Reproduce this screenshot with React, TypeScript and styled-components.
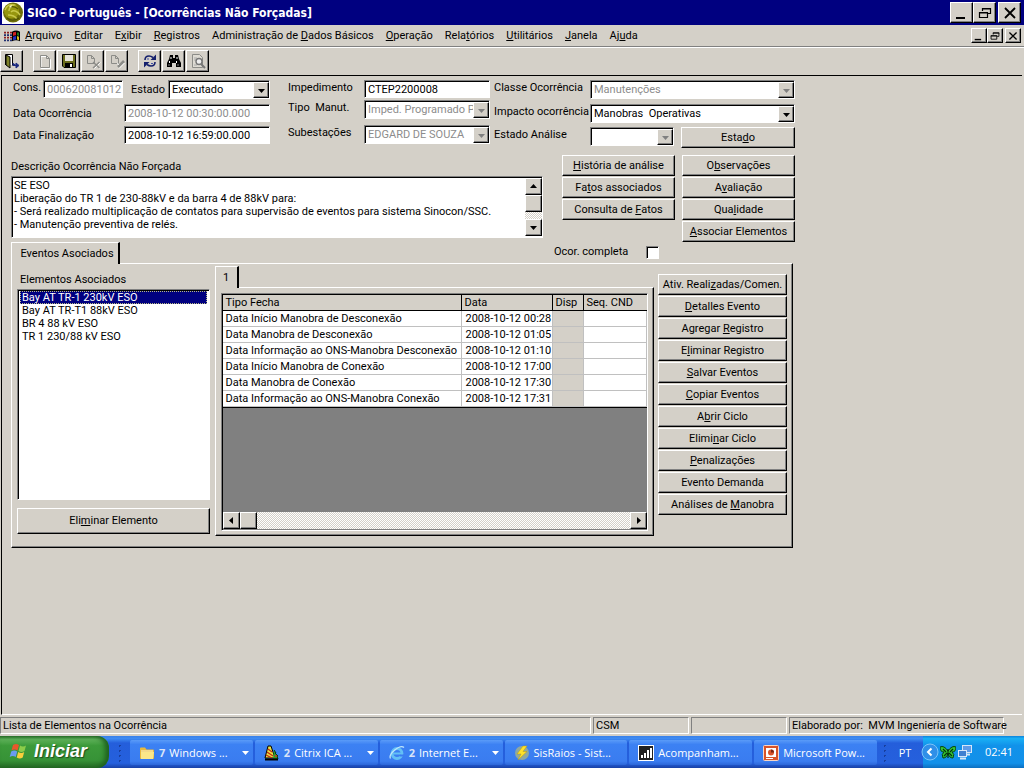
import React from "react";
import styled, { createGlobalStyle, css } from "styled-components";

const face = "#d4d0c8";
const sans = 'Roboto, "Liberation Sans", Arial, sans-serif';
const taskFont = '"Open Sans", "Noto Sans", sans-serif';
const titleFont = '"DejaVu Sans Condensed", "Noto Sans", sans-serif';

const raised = css`
  background: ${face};
  border: 1px solid;
  border-color: #fff #000 #000 #fff;
  box-shadow: inset -1px -1px 0 #808080;
`;
const sunken = css`
  border: 1px solid;
  border-color: #808080 #fff #fff #808080;
  box-shadow: inset 1px 1px 0 #000;
`;

const GlobalStyle = createGlobalStyle`
  *, *::before, *::after { box-sizing: border-box; }
  body { margin: 0; background: ${face}; font: 11px/14px ${sans}; color: #000; }
  button, input, select, textarea { font: inherit; color: inherit; margin: 0; padding: 0; border-radius: 0; }
`;

const Screen = styled.div`
  min-height: 100vh;
  display: flex;
  flex-direction: column;
`;

/* ---------- window chrome ---------- */
const TitleBar = styled.header`
  display: flex;
  align-items: center;
  height: 25px;
  padding: 0 3px 0 2px;
  background: #000080;
  color: #fff;
`;
const Title = styled.h1`
  margin: 0 auto 0 3px;
  font: bold 12px/20px ${titleFont};
  white-space: nowrap;
`;
const WindowButtons = styled.div`
  display: flex;
  button:last-child { margin-left: 2px; }
`;
const WindowButton = styled.button<{ $small?: boolean }>`
  ${raised}
  display: grid;
  place-items: center;
  width: ${(p) => (p.$small ? 16 : 23)}px;
  height: ${(p) => (p.$small ? 15 : 21)}px;
`;
const MenuBar = styled.nav`
  display: flex;
  align-items: center;
  height: 22px;
  padding: 0 3px 0 4px;
  border-bottom: 1px solid #808080;
`;
const MenuList = styled.div`
  display: flex;
  gap: 12px;
  margin: 0 auto 0 5px;
`;
const MenuItem = styled.button`
  border: 0;
  background: none;
  white-space: nowrap;
`;
const ToolBar = styled.div`
  display: flex;
  align-items: flex-start;
  gap: 10px;
  height: 28px;
  padding-top: 2px;
  border-top: 1px solid #fff;
`;
const ToolGroup = styled.div`
  display: flex;
  gap: 1px;
`;
const ToolButton = styled.button`
  ${raised}
  display: grid;
  place-items: center;
  width: 23px;
  height: 22px;
`;
const Workspace = styled.main`
  flex: 1;
  margin: 0 2px 0 1px;
  padding: 4px 0 8px 9px;
  border: solid #000;
  border-width: 1px 0 0 1px;
  border-bottom: 1px solid #fff;
`;
const Form = styled.form`
  width: 784px;
  max-width: 100%;
`;

/* ---------- fields ---------- */
const FieldColumns = styled.div`
  display: grid;
  grid-template-columns: 257px 202px 301px;
  column-gap: 4px;
  height: 75px;
  padding-left: 2px;
  > :nth-child(2) { margin: 0 -14px 0 14px; }
  > :nth-child(3) { margin-left: 14px; margin-right: -14px; }
`;
const FieldColumn = styled.div<{ $rows: string }>`
  display: grid;
  grid-template-rows: ${(p) => p.$rows};
`;
const FieldRow = styled.div<{ $label: number }>`
  display: grid;
  grid-template-columns: ${(p) => p.$label}px 1fr;
  align-items: start;
`;
const StateRow = styled.div`
  display: grid;
  grid-template-columns: 22px 80px 29px 102px;
  column-gap: 8px;
`;
const AnalysisRow = styled.div`
  display: flex;
  align-items: flex-start;
  label { flex: 0 0 96px; }
  > span { flex: 0 0 84px; }
  > button { width: 114px; margin-left: auto; }
`;
const Label = styled.label<{ $low?: boolean; $indent?: boolean }>`
  display: block;
  padding-top: ${(p) => (p.$low ? 3 : 1)}px;
  padding-left: ${(p) => (p.$indent ? 3 : 0)}px;
  white-space: nowrap;
`;
const TextField = styled.input`
  ${sunken}
  width: 100%;
  height: 18px;
  padding: 0 0 0 3px;
  background: #fff;
  &:disabled { color: #8c8c8c; }
`;
const SelectShell = styled.span`
  ${sunken}
  display: grid;
  height: 19px;
  background: #fff;
  > * { grid-area: 1 / 1; }
`;
const NativeSelect = styled.select`
  appearance: none;
  width: 100%;
  height: 17px;
  padding: 0 14px 0 3px;
  border: 0;
  background: transparent;
  &:disabled { color: #8c8c8c; opacity: 1; }
`;
const SelectArrow = styled.span<{ $off?: boolean }>`
  ${raised}
  display: grid;
  place-items: center;
  justify-self: end;
  width: 16px;
  height: 16px;
  margin-top: 1px;
  pointer-events: none;
  color: ${(p) => (p.$off ? "#808080" : "#000")};
`;
const PushButton = styled.button<{ $tall?: boolean }>`
  ${raised}
  width: 100%;
  height: ${(p) => (p.$tall ? 26 : 21)}px;
  white-space: nowrap;
`;

/* ---------- description ---------- */
const MiddleRow = styled.div`
  display: grid;
  grid-template-columns: 1fr 113px 113px;
  column-gap: 7px;
  height: 87px;
`;
const Description = styled.div`
  display: flex;
  flex-direction: column;
  padding: 4px 12px 2px 0;
`;
const MemoBox = styled.div`
  ${sunken}
  display: flex;
  height: 62px;
  margin-top: 2px;
  padding: 1px 0 1px 1px;
  background: #fff;
`;
const Memo = styled.textarea`
  flex: 1;
  resize: none;
  overflow: hidden;
  border: 0;
  padding: 1px;
  line-height: 13px;
  background: transparent;
`;
const ButtonStack = styled.div`
  display: flex;
  flex-direction: column;
  gap: 1px;
`;
const ScrollTrack = styled.div<{ $across?: boolean }>`
  display: flex;
  flex-direction: ${(p) => (p.$across ? "row" : "column")};
  justify-content: space-between;
  background: repeating-conic-gradient(#fff 0 25%, ${face} 0 50%) 0 0 / 2px 2px;
`;
const ScrollHead = styled.div<{ $across?: boolean }>`
  display: flex;
  flex-direction: ${(p) => (p.$across ? "row" : "column")};
`;
const ScrollPiece = styled.button`
  ${raised}
  display: grid;
  place-items: center;
  width: 17px;
  height: 17px;
`;

/* ---------- tabs ---------- */
const TabHead = styled.div`
  display: flex;
  align-items: flex-end;
  height: 21px;
`;
const Tab = styled.button<{ $inner?: boolean }>`
  height: 22px;
  width: ${(p) => (p.$inner ? 24 : 109)}px;
  margin-bottom: -1px;
  padding: 1px 0 0 ${(p) => (p.$inner ? 0 : 4)}px;
  border: 1px solid;
  border-color: #fff #000 transparent #fff;
  border-bottom: 0;
  border-right-width: 2px;
  background: ${face};
`;
const CompleteRow = styled.div`
  display: flex;
  align-items: center;
  justify-content: space-between;
  width: 105px;
  margin-left: 434px;
  height: 22px;
`;
const CheckBox = styled.input`
  ${sunken}
  appearance: none;
  width: 13px;
  height: 13px;
  background: #fff;
  &:checked { background: #000; }
`;
const TabPanel = styled.section`
  display: grid;
  grid-template-columns: 193px 439px 129px;
  justify-content: space-between;
  width: 782px;
  height: 285px;
  padding: 2px 5px 0 5px;
  border: 1px solid;
  border-color: #fff #000 #000 #fff;
  box-shadow: inset -1px -1px 0 #808080;
`;
const ElementsColumn = styled.div`
  padding-top: 6px;
`;
const ListBox = styled.ul`
  ${sunken}
  height: 211px;
  margin: 2px 0 8px;
  padding: 1px 2px;
  list-style: none;
  background: #fff;
  line-height: 13px;
`;
const ListItem = styled.li<{ $selected?: boolean }>`
  padding-left: 2px;
  color: ${(p) => (p.$selected ? "#fff" : "#000")};
  background: ${(p) => (p.$selected ? "#000080" : "transparent")};
  outline: ${(p) => (p.$selected ? "1px dotted #b8b880" : "0")};
  outline-offset: -1px;
`;
const CyclePanel = styled.div`
  height: 249px;
  padding: 5px;
  border: 1px solid;
  border-color: #fff #000 #000 #fff;
  box-shadow: inset -1px -1px 0 #808080;
`;
const GridBox = styled.div`
  ${sunken}
  display: flex;
  flex-direction: column;
  justify-content: space-between;
  height: 238px;
  padding: 1px 0 1px 1px;
  background: #808080;
`;
const DataTable = styled.table`
  width: 100%;
  table-layout: fixed;
  border-collapse: separate;
  border-spacing: 0;
  border-bottom: 1px solid #000;
`;
const HeadCell = styled.th<{ $w?: number }>`
  width: ${(p) => (p.$w ? `${p.$w}px` : "auto")};
  height: 16px;
  padding: 0 3px;
  border-right: 1px solid #000;
  border-bottom: 1px solid #000;
  background: ${face};
  font-weight: normal;
  text-align: left;
  white-space: nowrap;
  &:last-child { border-right: 0; }
`;
const Cell = styled.td<{ $gray?: boolean }>`
  height: 16px;
  padding: 1px 0 0 3px;
  border-right: 1px solid #c0c0c0;
  border-bottom: 1px solid #c0c0c0;
  background: ${(p) => (p.$gray ? face : "#fff")};
  white-space: nowrap;
  &:nth-child(2) { padding-left: 4px; }
`;
const ActionColumn = styled(ButtonStack)`
  padding-top: 8px;
`;

/* ---------- status bar ---------- */
const StatusBar = styled.footer`
  display: grid;
  grid-template-columns: 1fr 96px 96px 215px;
  gap: 2px;
  height: 21px;
  padding: 2px 20px 2px 0;
  line-height: 15px;
`;
const StatusPane = styled.div`
  border: 1px solid;
  border-color: #808080 #fff #fff #808080;
  padding-left: 2px;
  white-space: nowrap;
`;

/* ---------- taskbar ---------- */
const TaskBar = styled.div`
  display: flex;
  height: 32px;
  background: linear-gradient(#3a80e8 0, #3f8cf3 8%, #245edb 22%, #2560dd 85%, #1941a5 100%);
  color: #fff;
  font: 11px/16px ${taskFont};
`;
const StartButton = styled.button`
  display: flex;
  align-items: center;
  gap: 5px;
  width: 109px;
  padding: 0 0 2px 9px;
  border: 0;
  border-radius: 0 12px 12px 0;
  background: linear-gradient(#2f7a2f 0, #5fb25a 10%, #3c9a3a 30%, #379337 75%, #256b25 100%);
  box-shadow: inset -4px 0 5px #1f611f;
  font: italic bold 18px/24px "Liberation Sans", sans-serif;
  text-shadow: 1px 1px 1px #1c4d1c;
`;
const GripSlot = styled.div<{ $narrow?: boolean }>`
  display: flex;
  justify-content: center;
  width: ${(p) => (p.$narrow ? 14 : 21)}px;
  flex: none;
`;
const Grip = styled.span`
  width: 5px;
  height: 22px;
  margin-top: 7px;
  background: radial-gradient(#173f9f 1px, transparent 1px) 0 0 / 5px 5px;
`;
const TaskList = styled.div`
  flex: 1;
  display: grid;
  grid-template-columns: repeat(6, minmax(0, 1fr));
  gap: 2px;
  padding: 4px 0 3px;
  min-width: 0;
`;
const TaskButton = styled.button`
  display: flex;
  align-items: center;
  gap: 4px;
  padding: 0 4px 0 9px;
  border: 0;
  border-radius: 2px;
  background: linear-gradient(#5a9bf8 0, #3c81f3 18%, #3a7cf0 85%, #2c66d8 100%);
  white-space: nowrap;
  > svg { flex: none; }
  > svg:last-child { margin-left: auto; }
  b { color: #d9e4f8; }
`;
const Language = styled.div`
  display: grid;
  place-items: center;
  width: 32px;
  padding: 2px 4px 0 0;
`;
const Tray = styled.div`
  display: flex;
  align-items: center;
  gap: 1px;
  width: 101px;
  padding-right: 11px;
  background: linear-gradient(#0d83dc 0, #19b0f5 8%, #1192ea 30%, #1290e9 85%, #0d6fc0 100%);
`;
const Chevron = styled.button`
  display: flex;
  margin-left: -2px;
  border: 0;
  background: none;
`;
const Clock = styled.time`
  margin-left: auto;
`;

/* ---------- drawings ---------- */
type Dir = "up" | "down" | "left" | "right";
const arrowPoints: Record<Dir, string> = {
  down: "0,2 7,2 3.5,6",
  up: "0,5 7,5 3.5,1",
  left: "5,0 5,7 1,3.5",
  right: "2,0 2,7 6,3.5",
};
const Arrow = ({ dir, fill = "currentColor" }: { dir: Dir; fill?: string }) => (
  <svg width="7" height="7" viewBox="0 0 7 7" aria-hidden="true">
    <polygon points={arrowPoints[dir]} fill={fill} />
  </svg>
);

const OrbLogo = () => (
  <svg width="22" height="22" viewBox="0 0 22 22" aria-hidden="true">
    <rect width="22" height="22" fill="#fff" />
    <circle cx="11" cy="10.5" r="10" fill="#6f6f08" />
    <circle cx="9.5" cy="9" r="7.5" fill="#96960f" />
    <path d="M3 8c2-5 6-6 9-5-3 1-5 3-5 6M9 10c3-3 7 0 9 3M6 13c4 0 7 1 9 4" fill="none" stroke="#c9c84a" strokeWidth="1.5" />
    <path d="M8 5c3-1 6 0 8 2M5 16c3 3 8 3 12 0" fill="none" stroke="#4f5206" strokeWidth="1.2" />
    <path d="M7 4l3-1-1 3z" fill="#f4f4b8" />
  </svg>
);
const FormLogo = () => (
  <svg width="16" height="12" viewBox="0 0 16 14" preserveAspectRatio="none" aria-hidden="true">
    <path d="M0 3h2M3 3h2M6 3h2M0 9h2M3 9h2M6 9h2" stroke="#8a2020" strokeWidth="2" />
    <path d="M0 6h2M3 6h2M6 6h2M0 12h2M3 12h2M6 12h2" stroke="#22306f" strokeWidth="2" />
    <path d="M8 2q4-3 8 0v11q-4-2-8 0z" fill="#000" />
    <path d="M9 3q2-1 3-1v4q-2 0-3 1z" fill="#d02020" />
    <path d="M13 3h2v4l-2-1z" fill="#187818" />
    <path d="M9 8l3-1v4l-3 1z" fill="#2030c0" />
    <path d="M13 7l2 1v4l-2-1z" fill="#d8c020" />
  </svg>
);
const Minimize = ({ s }: { s: number }) => (
  <svg width={s} height={s} viewBox="0 0 14 14" aria-hidden="true"><path d="M1 12h9" stroke="#000" strokeWidth="2" /></svg>
);
const Restore = ({ s }: { s: number }) => (
  <svg width={s} height={s} viewBox="0 0 14 14" aria-hidden="true">
    <path d="M4.500 5V2.500h8v5H10M4 3h9M1.500 6.500h8v5h-8zM1 7h9" fill="none" stroke="#000" strokeWidth="1.200" />
  </svg>
);
const Close = ({ s }: { s: number }) => (
  <svg width={s} height={s} viewBox="0 0 14 14" aria-hidden="true"><path d="M2 2l10 10M12 2L2 12" stroke="#000" strokeWidth="1.8" /></svg>
);
const Glyph = ({ children, size = 16 }: { children: React.ReactNode; size?: number }) => (
  <svg width={size} height={size} viewBox="0 0 16 16" fill="none" aria-hidden="true">{children}</svg>
);
const ExitIcon = () => (
  <Glyph>
    <path d="M1.500 12V1.500h7V12" stroke="#000" fill="#fff" />
    <path d="M2 2l4 2v11l-4-3z" fill="#7d8028" stroke="#000" />
    <path d="M8 12h3" stroke="#000" />
    <path d="M9 10v2.500h4M12 10l3 2.500-3 2.500z" stroke="#1c2b80" fill="#1c2b80" />
  </Glyph>
);
const NewIcon = () => (
  <Glyph>
    <path d="M4 3.500h6l3.500 3v9H4z" stroke="#fff" />
    <path d="M3.500 2.500h6l3 3v9h-9zM9.500 2.500v3h3" stroke="#8c8c88" />
  </Glyph>
);
const SaveIcon = () => (
  <Glyph>
    <path d="M1.500 1.500h13v13H3l-1.500-1.500z" fill="#6a6c1c" stroke="#000" />
    <path d="M4 2h8v6H4z" fill="#e6e4da" />
    <path d="M4 10h8v5H4z" fill="#000" />
    <path d="M9 11h2v3H9z" fill="#fff" />
  </Glyph>
);
const DeleteIcon = () => (
  <Glyph>
    <path d="M2.500 2.500h4l3 3v5h-7zM6.500 2.500v3h3" stroke="#8c8c88" />
    <path d="M9 10l6 5.500M15.500 9.500l-6 6" stroke="#fff" />
    <path d="M8 9l6.500 6M14.500 9l-6.500 6" stroke="#8c8c88" strokeWidth="1.400" />
  </Glyph>
);
const EditIcon = () => (
  <Glyph>
    <path d="M2.500 2.500h4l3 3v5h-7zM6.500 2.500v3h3" stroke="#8c8c88" />
    <path d="M9 14l6-6" stroke="#8c8c88" strokeWidth="2.600" />
    <path d="M10 15.500l5.500-5.500M8 10.500l2 1" stroke="#fff" />
  </Glyph>
);
const RefreshIcon = () => (
  <Glyph>
    <path d="M3 7q0-4 4-4 2 0 4 1.500M13 9q0 4-4 4-2 0-4-1.500" stroke="#15206c" strokeWidth="1.600" />
    <path d="M8.500 7H14V1.500zM7.500 9H2v5.500z" fill="#15206c" />
    <path d="M5 6h2M9 10.500h2" stroke="#3f4fa8" />
  </Glyph>
);
const FindIcon = () => (
  <Glyph>
    <path d="M4 2h3v3h2V2h3l1 4 2 4v4h-5v-4H6v4H1v-4l2-4z" fill="#000" />
    <path d="M3.500 8v2M10.500 8v2M5 4v2M11 4v2M2.500 12h1M11.500 12h1" stroke="#fff" />
  </Glyph>
);
const PreviewIcon = () => (
  <Glyph>
    <path d="M2.500 1.500h7l3 3v10h-10z" stroke="#8c8c88" fill="#dedbd3" />
    <path d="M4 5h3M4 7h2M4 12h3" stroke="#aaa" />
    <circle cx="9" cy="8.500" r="3" stroke="#777" strokeWidth="1.400" fill="#eee" />
    <path d="M11 11l4 4" stroke="#777" strokeWidth="2" />
  </Glyph>
);
const FlagIcon = () => (
  <svg width="20" height="20" viewBox="0 0 20 20" aria-hidden="true">
    <path d="M4 4q3-2 6 0L8.500 9.500q-3-2-6 0z" fill="#e8572b" />
    <path d="M11 4.500q3 2 6 0L15.500 10q-3 2-6 0z" fill="#8ccc4a" />
    <path d="M2.200 10.500q3-2 6 0L6.700 16q-3-2-6 0z" fill="#6a9bf0" />
    <path d="M9.200 11q3 2 6 0l-1.500 5.500q-3 2-6 0z" fill="#f8cf3c" />
  </svg>
);
const FolderIcon = () => (
  <Glyph>
    <path d="M1 3.500q0-1 1-1h4l1.500 2H14q1 0 1 1V13q0 1-1 1H2q-1 0-1-1z" fill="#e9b93c" />
    <path d="M2 7h13l-1 7H2z" fill="#fbe789" />
    <path d="M2 6h12" stroke="#fffbd8" />
  </Glyph>
);
const CitrixIcon = () => (
  <Glyph>
    <path d="M4 1h3l4 12H1z" fill="#e8e040" stroke="#000" />
    <path d="M4 4l4 3M3 7l6 4M2 10l6 3" stroke="#c02818" strokeWidth="1.300" />
    <path d="M10 5l2 3h-1l3 3h-1l1 3H9" stroke="#083c08" fill="#2f9a2f" />
    <path d="M1 14.500h13" stroke="#000" strokeWidth="2" />
    <circle cx="12" cy="11" r="1" fill="#e03020" />
  </Glyph>
);
const BrowserIcon = () => (
  <Glyph>
    <circle cx="8" cy="8.500" r="5" stroke="#63c0f5" strokeWidth="2.800" />
    <path d="M4 8.500h9" stroke="#63c0f5" strokeWidth="2" />
    <path d="M11 10.500h4" stroke="#3a7cf0" strokeWidth="2" />
    <path d="M1.500 13.500C-1 9 11-1 15 2.500" stroke="#bfe6fb" strokeWidth="1.300" />
  </Glyph>
);
const BoltIcon = () => (
  <Glyph>
    <circle cx="8" cy="8" r="7" fill="#8fa8a0" />
    <path d="M9 1L3 9h4l-3 6 9-8.500H9L13 1z" fill="#ffe22a" stroke="#b99a10" strokeWidth=".5" />
  </Glyph>
);
const ChartIcon = () => (
  <Glyph>
    <rect x=".5" y=".5" width="15" height="15" fill="#202020" stroke="#fff" />
    <path d="M4 13v-3M7 13V8M10 13V5M13 13V3" stroke="#fff" strokeWidth="2" />
  </Glyph>
);
const SlidesIcon = () => (
  <Glyph>
    <rect x=".5" y=".5" width="15" height="15" rx="1" fill="#d8532a" stroke="#f7d5c5" />
    <rect x="3" y="3" width="10" height="9" fill="#fff" />
    <circle cx="8" cy="7.500" r="3" fill="#d8532a" />
    <path d="M8 7.500v-3a3 3 0 0 1 3 3z" fill="#7c2410" />
    <path d="M3 13.500h7" stroke="#fff" />
  </Glyph>
);
const ButterflyIcon = () => (
  <Glyph>
    <path d="M8 7Q4 1 0 3q0 5 4 5-3 2-1 6 4 0 5-5 1 5 5 5 2-4-1-6 4 0 4-5-4-2-8 4z" fill="#35c535" stroke="#04440c" />
    <path d="M8 5v9M3 5l3 3M13 5l-3 3M4 12l3-3M12 12l-3-3" stroke="#04340a" strokeWidth="1.200" />
  </Glyph>
);
const NetworkIcon = () => (
  <Glyph>
    <rect x="5.500" y="1.500" width="9" height="7" fill="#5f9be8" stroke="#d6e6f8" />
    <path d="M8 10.500h5" stroke="#d6e6f8" strokeWidth="2" />
    <rect x="1.500" y="6.500" width="8" height="6" fill="#3f7fd0" stroke="#d6e6f8" />
    <path d="M3 14.500h6" stroke="#d6e6f8" strokeWidth="2" />
  </Glyph>
);

/* Text with its access key marked by an ampersand, e.g. "E&xibir". */
const Keyed = ({ text }: { text: string }) => {
  const at = text.indexOf("&");
  if (at < 0) return <>{text}</>;
  return (
    <>
      {text.slice(0, at)}
      <u>{text[at + 1]}</u>
      {text.slice(at + 2)}
    </>
  );
};

const Combo = ({ id, value, disabled }: { id: string; value: string; disabled?: boolean }) => (
  <SelectShell>
    <NativeSelect id={id} disabled={disabled} defaultValue={value}>
      <option>{value}</option>
    </NativeSelect>
    <SelectArrow $off={disabled}><Arrow dir="down" /></SelectArrow>
  </SelectShell>
);

const menus = ["&Arquivo", "&Editar", "E&xibir", "&Registros", "Administração de &Dados Básicos", "&Operação", "Rela&tórios", "&Utilitários", "&Janela", "Aj&uda"];
const toolGroups = [
  [{ name: "Sair", Icon: ExitIcon }],
  [{ name: "Novo", Icon: NewIcon }, { name: "Salvar", Icon: SaveIcon }, { name: "Excluir", Icon: DeleteIcon }, { name: "Editar", Icon: EditIcon }],
  [{ name: "Atualizar", Icon: RefreshIcon }, { name: "Localizar", Icon: FindIcon }, { name: "Visualizar", Icon: PreviewIcon }],
];
const analysisButtons = ["&História de análise", "Fa&tos associados", "Consulta de &Fatos"];
const qualityButtons = ["O&bservações", "A&valiação", "Qua&lidade", "&Associar Elementos"];
const eventButtons = ["Ativ. Reali&zadas/Comen.", "&Detalles Evento", "Agregar &Registro", "E&liminar Registro", "&Salvar Eventos", "&Copiar Eventos", "A&brir Ciclo", "Elimi&nar Ciclo", "&Penalizações", "Evento Demanda", "Análises de &Manobra"];
const elements = ["Bay AT TR-1 230kV ESO", "Bay AT TR-T1 88kV ESO", "BR 4 88 kV ESO", "TR 1 230/88 kV ESO"];
const events = [
  ["Data Início Manobra de Desconexão", "2008-10-12 00:28"],
  ["Data Manobra de Desconexão", "2008-10-12 01:05"],
  ["Data Informação ao ONS-Manobra Desconexão", "2008-10-12 01:10"],
  ["Data Início Manobra de Conexão", "2008-10-12 17:00"],
  ["Data Manobra de Conexão", "2008-10-12 17:30"],
  ["Data Informação ao ONS-Manobra Conexão", "2008-10-12 17:31"],
];
const tasks = [
  { count: "7", text: "Windows ...", Icon: FolderIcon },
  { count: "2", text: "Citrix ICA ...", Icon: CitrixIcon },
  { count: "2", text: "Internet E...", Icon: BrowserIcon },
  { count: "", text: "SisRaios - Sist...", Icon: BoltIcon },
  { count: "", text: "Acompanham...", Icon: ChartIcon },
  { count: "", text: "Microsoft Pow...", Icon: SlidesIcon },
];
const description = `SE ESO
Liberação do TR 1 de 230-88kV e da barra 4 de 88kV para:
- Será realizado multiplicação de contatos para supervisão de eventos para sistema Sinocon/SSC.
- Manutenção preventiva de relés.`;

const Controls = ({ small }: { small?: boolean }) => {
  const s = small ? 10 : 14;
  return (
    <WindowButtons>
      <WindowButton type="button" $small={small} aria-label="Minimizar"><Minimize s={s} /></WindowButton>
      <WindowButton type="button" $small={small} aria-label="Restaurar"><Restore s={s} /></WindowButton>
      <WindowButton type="button" $small={small} aria-label="Fechar"><Close s={s} /></WindowButton>
    </WindowButtons>
  );
};

const Buttons = ({ items }: { items: string[] }) => (
  <>
    {items.map((t) => (
      <PushButton type="button" key={t}><Keyed text={t} /></PushButton>
    ))}
  </>
);

export default function App() {
  return (
    <Screen>
      <GlobalStyle />
      <TitleBar>
        <OrbLogo />
        <Title>SIGO - Português - [Ocorrências Não Forçadas]</Title>
        <Controls />
      </TitleBar>
      <MenuBar>
        <FormLogo />
        <MenuList>
          {menus.map((m) => <MenuItem key={m}><Keyed text={m} /></MenuItem>)}
        </MenuList>
        <Controls small />
      </MenuBar>
      <ToolBar>
        {toolGroups.map((group, i) => (
          <ToolGroup key={i}>
            {group.map(({ name, Icon }) => (
              <ToolButton key={name} aria-label={name}><Icon /></ToolButton>
            ))}
          </ToolGroup>
        ))}
      </ToolBar>

      <Workspace>
        <Form onSubmit={(e) => e.preventDefault()}>
          <FieldColumns>
            <FieldColumn $rows="24px 22px 18px">
              <StateRow>
                <Label htmlFor="cons">Cons.</Label>
                <TextField id="cons" disabled defaultValue="000620081012" />
                <Label htmlFor="estado" $low>Estado</Label>
                <Combo id="estado" value="Executado" />
              </StateRow>
              <FieldRow $label={111}>
                <Label htmlFor="ocorrencia" $low>Data Ocorrência</Label>
                <TextField id="ocorrencia" disabled defaultValue="2008-10-12 00:30:00.000" />
              </FieldRow>
              <FieldRow $label={111}>
                <Label htmlFor="finalizacao" $low>Data Finalização</Label>
                <TextField id="finalizacao" defaultValue="2008-10-12 16:59:00.000" />
              </FieldRow>
            </FieldColumn>
            <FieldColumn $rows="20px 25px 18px">
              <FieldRow $label={76}>
                <Label htmlFor="impedimento">Impedimento</Label>
                <TextField id="impedimento" defaultValue="CTEP2200008" />
              </FieldRow>
              <FieldRow $label={76}>
                <Label htmlFor="manut">Tipo&nbsp; Manut.</Label>
                <Combo id="manut" value="Imped. Programado P" disabled />
              </FieldRow>
              <FieldRow $label={76}>
                <Label htmlFor="subestacoes">Subestações</Label>
                <Combo id="subestacoes" value="EDGARD DE SOUZA" disabled />
              </FieldRow>
            </FieldColumn>
            <FieldColumn $rows="24px 23px 21px">
              <FieldRow $label={96}>
                <Label htmlFor="classe">Classe Ocorrência</Label>
                <Combo id="classe" value="Manutenções" disabled />
              </FieldRow>
              <FieldRow $label={96}>
                <Label htmlFor="impacto">Impacto ocorrência</Label>
                <Combo id="impacto" value={"Manobras\u00a0 Operativas"} />
              </FieldRow>
              <AnalysisRow>
                <Label htmlFor="analise">Estado Análise</Label>
                <Combo id="analise" value="" disabled />
                <PushButton type="button"><Keyed text="Esta&do" /></PushButton>
              </AnalysisRow>
            </FieldColumn>
          </FieldColumns>

          <MiddleRow>
            <Description>
              <Label htmlFor="descricao">Descrição Ocorrência Não Forçada</Label>
              <MemoBox>
                <Memo id="descricao" defaultValue={description} spellCheck={false} />
                <ScrollTrack>
                  <ScrollHead>
                    <ScrollPiece type="button" aria-label="Rolar para cima"><Arrow dir="up" /></ScrollPiece>
                    <ScrollPiece type="button" aria-label="Posição" />
                  </ScrollHead>
                  <ScrollPiece type="button" aria-label="Rolar para baixo"><Arrow dir="down" /></ScrollPiece>
                </ScrollTrack>
              </MemoBox>
            </Description>
            <ButtonStack><Buttons items={analysisButtons} /></ButtonStack>
            <ButtonStack><Buttons items={qualityButtons} /></ButtonStack>
          </MiddleRow>

          <TabHead>
            <Tab type="button">Eventos Asociados</Tab>
            <CompleteRow>
              <label htmlFor="completa">Ocor. completa</label>
              <CheckBox id="completa" type="checkbox" />
            </CompleteRow>
          </TabHead>
          <TabPanel>
            <ElementsColumn>
              <Label as="div" $indent>Elementos Asociados</Label>
              <ListBox>
                {elements.map((e, i) => <ListItem key={e} $selected={i === 0}>{e}</ListItem>)}
              </ListBox>
              <PushButton type="button" $tall><Keyed text="Eli&minar Elemento" /></PushButton>
            </ElementsColumn>
            <div>
              <TabHead><Tab type="button" $inner>1</Tab></TabHead>
              <CyclePanel>
                <GridBox>
                  <DataTable>
                    <thead>
                      <tr>
                        <HeadCell $w={239}>Tipo Fecha</HeadCell>
                        <HeadCell $w={91}>Data</HeadCell>
                        <HeadCell $w={31}>Disp</HeadCell>
                        <HeadCell>Seq. CND</HeadCell>
                      </tr>
                    </thead>
                    <tbody>
                      {events.map(([kind, date]) => (
                        <tr key={kind}>
                          <Cell>{kind}</Cell>
                          <Cell>{date}</Cell>
                          <Cell $gray />
                          <Cell />
                        </tr>
                      ))}
                    </tbody>
                  </DataTable>
                  <ScrollTrack $across>
                    <ScrollHead $across>
                      <ScrollPiece type="button" aria-label="Rolar para a esquerda"><Arrow dir="left" /></ScrollPiece>
                      <ScrollPiece type="button" aria-label="Posição" />
                    </ScrollHead>
                    <ScrollPiece type="button" aria-label="Rolar para a direita"><Arrow dir="right" /></ScrollPiece>
                  </ScrollTrack>
                </GridBox>
              </CyclePanel>
            </div>
            <ActionColumn><Buttons items={eventButtons} /></ActionColumn>
          </TabPanel>
        </Form>
      </Workspace>

      <StatusBar>
        <StatusPane>Lista de Elementos na Ocorrência</StatusPane>
        <StatusPane>CSM</StatusPane>
        <StatusPane />
        <StatusPane>Elaborado por:&nbsp; MVM Ingeniería de Software</StatusPane>
      </StatusBar>

      <TaskBar>
        <StartButton><FlagIcon />Iniciar</StartButton>
        <GripSlot><Grip /></GripSlot>
        <TaskList>
          {tasks.map(({ count, text, Icon }) => (
            <TaskButton key={text}>
              <Icon />
              {count && <b>{count}</b>}
              <span>{text}</span>
              {count && <Arrow dir="down" fill="#fff" />}
            </TaskButton>
          ))}
        </TaskList>
        <GripSlot $narrow><Grip /></GripSlot>
        <Language>PT</Language>
        <Tray>
          <Chevron aria-label="Mostrar ícones ocultos">
            <svg width="18" height="18" viewBox="0 0 18 18" aria-hidden="true">
              <circle cx="9" cy="9" r="8" fill="#2f8fe8" stroke="#7cc4f8" />
              <path d="M10.500 5.500L7 9l3.500 3.500" fill="none" stroke="#fff" strokeWidth="2" />
            </svg>
          </Chevron>
          <ButterflyIcon />
          <NetworkIcon />
          <Clock>02:41</Clock>
        </Tray>
      </TaskBar>
    </Screen>
  );
}
